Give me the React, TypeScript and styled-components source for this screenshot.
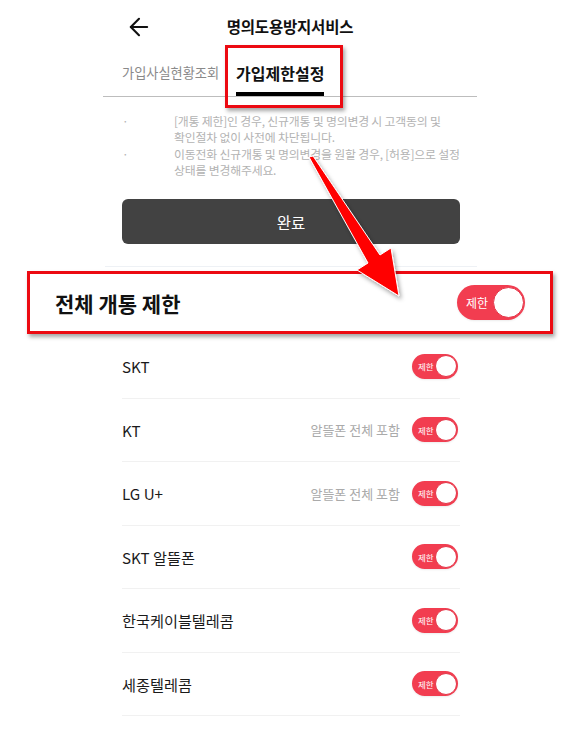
import React from "react"
import styled, { createGlobalStyle } from "styled-components"
import { ArrowLeft } from "lucide-react"

const GlobalStyle = createGlobalStyle`
    * { box-sizing: border-box; }
    body {
        margin: 0;
        background: #ffffff;
        font-family: "Noto Sans CJK KR", "Noto Sans", sans-serif;
        color: #111111;
    }
`

const colors = {
    red: "#f23d50",
    annotation: "#ec0a12",
    line: "#bdbdbd",
    rowLine: "#f1f1f1",
    note: "#b3b3b3",
}

const Page = styled.div`
    position: relative;
    width: 587px;
    height: 739px;
    overflow: hidden;
    padding: 0 110px 0 103px;
    display: flex;
    flex-direction: column;
`

const Header = styled.header`
    height: 54px;
    display: grid;
    grid-template-columns: 60px 1fr 60px;
    align-items: center;
`

const BackButton = styled.div`
    display: flex;
    align-items: center;
    padding-left: 22px;
    color: #111;
`

const Title = styled.h1`
    margin: 0;
    padding-bottom: 2px;
    text-align: center;
    font-size: 15.5px;
    font-weight: 700;
    letter-spacing: -0.2px;
`

const TabBar = styled.nav`
    height: 43px;
    display: flex;
    align-items: flex-end;
    gap: 17px;
    padding-left: 19px;
    border-bottom: 1px solid ${colors.line};
`

const TabItem = styled.div<{ active?: boolean }>`
    position: relative;
    height: 42px;
    display: flex;
    flex-direction: column;
    justify-content: space-between;
    padding-top: 8px;
    font-size: ${({ active }) => (active ? "16px" : "13.2px")};
    font-weight: ${({ active }) => (active ? 700 : 400)};
    color: ${({ active }) => (active ? "#111" : "#8a8a8a")};
    line-height: 22px;
    border-bottom: 4px solid ${({ active }) => (active ? "#000" : "transparent")};
`

const TabHighlight = styled.span`
    position: absolute;
    left: -11px;
    right: -19px;
    top: -9px;
    bottom: -16px;
    border: 3px solid ${colors.annotation};
    box-shadow: 2px 3px 4px rgba(0, 0, 0, 0.35);
    pointer-events: none;
`

const Notes = styled.ul`
    list-style: none;
    margin: 16px 0 0;
    padding: 0 0 0 19px;
    display: flex;
    flex-direction: column;
`

const Note = styled.li`
    display: flex;
    font-size: 11.9px;
    line-height: 16.3px;
    letter-spacing: -0.2px;
    color: ${colors.note};
    white-space: nowrap;
`

const Bullet = styled.span`
    width: 52px;
    flex: none;
`

const DoneButton = styled.button`
    margin: 21px 17px 0 19px;
    height: 45px;
    border: none;
    border-radius: 6px;
    background: #424242;
    color: #ffffff;
    font-family: inherit;
    font-size: 15.5px;
    font-weight: 400;
`

const SoftDivider = styled.div`
    margin: 22px 0 0 2px;
    height: 1px;
    background: #eef1f5;
`

const Callout = styled.div`
    margin: 4px -76px 0 -76px;
    height: 63px;
    border: 3px solid ${colors.annotation};
    background: #ffffff;
    box-shadow: 2px 3px 4px rgba(0, 0, 0, 0.35);
    display: flex;
    align-items: center;
    justify-content: space-between;
    padding: 0 25px 0 25px;
`

const CalloutTitle = styled.span`
    font-size: 21px;
    font-weight: 700;
    color: #111;
`

const List = styled.ul`
    list-style: none;
    margin: 1px 17px 0 19px;
    padding: 0;
`

const Row = styled.li`
    height: 63.5px;
    display: flex;
    align-items: center;
    padding-right: 2px;
    border-bottom: 1px solid ${colors.rowLine};
`

const RowLabel = styled.span`
    flex: 1;
    font-size: 15.2px;
    color: #1a1a1a;
`

const RowHint = styled.span`
    font-size: 13px;
    color: #aaaaaa;
    margin-right: 12px;
`

const Track = styled.div<{ size: "sm" | "lg" }>`
    flex: none;
    width: ${({ size }) => (size === "lg" ? 68 : 46)}px;
    height: ${({ size }) => (size === "lg" ? 35 : 25)}px;
    border-radius: 20px;
    background: ${colors.red};
    display: flex;
    align-items: center;
    justify-content: space-between;
    padding: 0 1.5px 0 ${({ size }) => (size === "lg" ? 9 : 6)}px;
    box-shadow: 0 1px 2px rgba(0, 0, 0, 0.08);
`

const TrackLabel = styled.span<{ size: "sm" | "lg" }>`
    font-size: ${({ size }) => (size === "lg" ? 12 : 8.5)}px;
    color: #ffffff;
    line-height: 1;
`

const Knob = styled.span<{ size: "sm" | "lg" }>`
    width: ${({ size }) => (size === "lg" ? 31 : 22)}px;
    height: ${({ size }) => (size === "lg" ? 31 : 22)}px;
    border-radius: 50%;
    background: #ffffff;
    border: 1px solid #e4384a;
`

const ArrowLayer = styled.svg`
    position: absolute;
    left: 0;
    top: 0;
    pointer-events: none;
`

const Toggle: React.FC<{ size?: "sm" | "lg" }> = ({ size = "sm" }) => (
    <Track size={size}>
        <TrackLabel size={size}>제한</TrackLabel>
        <Knob size={size} />
    </Track>
)

const carriers = [
    { name: "SKT" },
    { name: "KT", hint: "알뜰폰 전체 포함" },
    { name: "LG U+", hint: "알뜰폰 전체 포함" },
    { name: "SKT 알뜰폰" },
    { name: "한국케이블텔레콤" },
    { name: "세종텔레콤" },
]

export default function App() {
    return (
        <>
            <GlobalStyle />
            <Page>
                <Header>
                    <BackButton>
                        <ArrowLeft size={28} strokeWidth={1.8} />
                    </BackButton>
                    <Title>명의도용방지서비스</Title>
                    <span />
                </Header>

                <TabBar>
                    <TabItem>가입사실현황조회</TabItem>
                    <TabItem active>
                        가입제한설정
                        <TabHighlight />
                    </TabItem>
                </TabBar>

                <Notes>
                    <Note>
                        <Bullet>·</Bullet>
                        <span>
                            [개통 제한]인 경우, 신규개통 및 명의변경 시 고객동의 및
                            <br />
                            확인절차 없이 사전에 차단됩니다.
                        </span>
                    </Note>
                    <Note>
                        <Bullet>·</Bullet>
                        <span>
                            이동전화 신규개통 및 명의변경을 원할 경우, [허용]으로 설정
                            <br />
                            상태를 변경해주세요.
                        </span>
                    </Note>
                </Notes>

                <DoneButton>완료</DoneButton>

                <SoftDivider />

                <Callout>
                    <CalloutTitle>전체 개통 제한</CalloutTitle>
                    <Toggle size="lg" />
                </Callout>

                <List>
                    {carriers.map((c) => (
                        <Row key={c.name}>
                            <RowLabel>{c.name}</RowLabel>
                            {c.hint && <RowHint>{c.hint}</RowHint>}
                            <Toggle />
                        </Row>
                    ))}
                </List>

                <ArrowLayer width="587" height="739" viewBox="0 0 587 739">
                    <defs>
                        <filter id="arrowShadow" x="-20%" y="-20%" width="140%" height="140%">
                            <feDropShadow dx="2" dy="3" stdDeviation="2" floodColor="#000" floodOpacity="0.35" />
                        </filter>
                    </defs>
                    <polygon
                        points="309,157 313,156 380,255 391,248 399,296 357,270 368,263"
                        fill="#ff0000"
                        stroke="#ffffff"
                        strokeWidth="1"
                        strokeLinejoin="miter"
                        filter="url(#arrowShadow)"
                    />
                </ArrowLayer>
            </Page>
        </>
    )
}
